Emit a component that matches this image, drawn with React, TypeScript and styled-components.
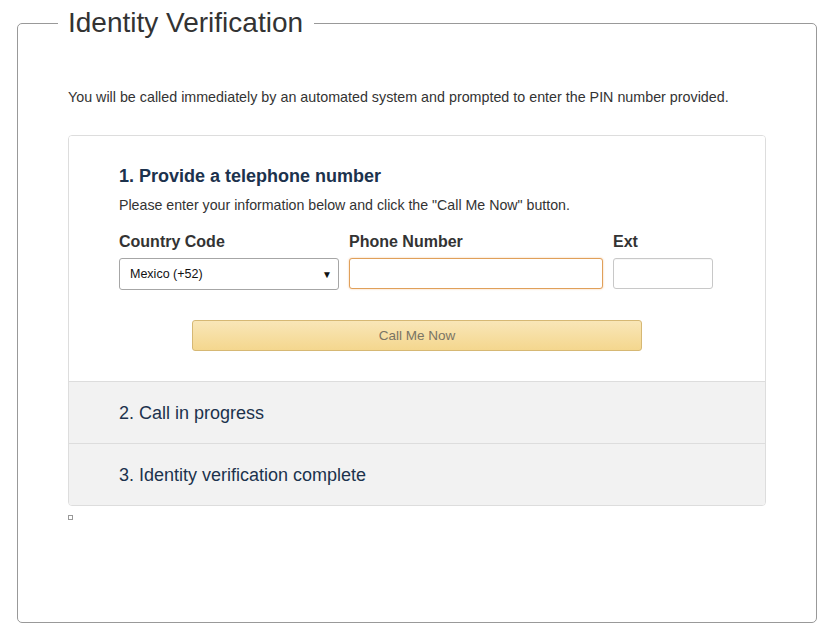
import React from "react";
import styled, { createGlobalStyle } from "styled-components";

const Global = createGlobalStyle`
  html, body { margin: 0; padding: 0; background: #fff; }
  body { font-family: "Liberation Sans", Arial, sans-serif; color: #333; }
`;

const Page = styled.div`
  padding: 8px 21px 0 17px;
`;

const Frame = styled.fieldset`
  margin: 0;
  box-sizing: border-box;
  height: 615px;
  border: 1px solid #999;
  border-radius: 5px;
  padding: 0 50px 0 40px;
`;

const Legend = styled.legend`
  font-size: 28px;
  line-height: 30px;
  color: #333;
  padding: 0 11px 0 10px;
`;

const Content = styled.div`
  padding: 0 0 0 10px;
`;

const Intro = styled.p`
  margin: 49px 0 28px;
  font-size: 14.3px;
  line-height: 20px;
  color: #333;
`;

const Card = styled.div`
  border: 1px solid #ddd;
  border-radius: 4px;
  overflow: hidden;
`;

const Step = styled.div<{ $active?: boolean }>`
  padding: ${(p) => (p.$active ? "27px 50px 30px" : "0 50px")};
  background: ${(p) => (p.$active ? "#fff" : "#f2f2f2")};
  border-top: ${(p) => (p.$active ? "none" : "1px solid #ddd")};
  height: ${(p) => (p.$active ? "auto" : "61px")};
  display: flex;
  flex-direction: column;
  justify-content: center;
`;

const StepTitle = styled.h3<{ $bold?: boolean }>`
  margin: 0;
  font-size: 18px;
  line-height: 26px;
  font-weight: ${(p) => (p.$bold ? 700 : 400)};
  color: #1c324d;
`;

const Hint = styled.p`
  margin: 6px 0 17px;
  font-size: 14.2px;
  line-height: 20px;
  color: #333;
`;

const Fields = styled.div`
  display: flex;
  gap: 10px;
`;

const Field = styled.div<{ $w: number }>`
  width: ${(p) => p.$w}px;
  display: flex;
  flex-direction: column;
`;

const Label = styled.label`
  font-size: 16px;
  font-weight: 700;
  line-height: 20px;
  color: #333;
  margin-bottom: 6px;
`;

const SelectBox = styled.div`
  box-sizing: border-box;
  height: 32px;
  border: 1px solid #a6a6a6;
  border-radius: 3px;
  display: flex;
  align-items: center;
  justify-content: space-between;
  padding: 0 6px 0 10px;
  font-size: 12.5px;
  color: #111;
  background: #fff;
`;

const Arrow = styled.span`
  font-size: 10px;
  color: #111;
`;

const Input = styled.input<{ $focus?: boolean }>`
  box-sizing: border-box;
  width: 100%;
  height: 31px;
  margin: 0;
  border: 1px solid ${(p) => (p.$focus ? "#e0a05a" : "#c8c8c8")};
  border-radius: 3px;
  box-shadow: ${(p) => (p.$focus ? "0 0 2px rgba(228,121,17,0.45)" : "inset 0 1px 0 rgba(0,0,0,0.03)")};
  outline: none;
  font-size: 13px;
  padding: 0 8px;
`;

const ButtonRow = styled.div`
  display: flex;
  justify-content: center;
  margin-top: 30px;
`;

const Button = styled.button`
  box-sizing: border-box;
  width: 450px;
  height: 31px;
  border: 1px solid #d6b874;
  border-radius: 3px;
  background: linear-gradient(to bottom, #f9e6b8, #f4d78e);
  color: #7a7464;
  font-family: "Liberation Sans", Arial, sans-serif;
  font-size: 13.5px;
  cursor: default;
`;

const Broken = styled.span`
  display: block;
  width: 3px;
  height: 3px;
  margin-top: 9px;
  border: 1px solid #999;
`;

export default function App() {
  return (
    <>
      <Global />
      <Page>
        <Frame>
          <Legend>Identity Verification</Legend>
          <Content>
            <Intro>
              You will be called immediately by an automated system and prompted to enter the PIN number provided.
            </Intro>
            <Card>
              <Step $active>
                <StepTitle $bold>1. Provide a telephone number</StepTitle>
                <Hint>Please enter your information below and click the "Call Me Now" button.</Hint>
                <Fields>
                  <Field $w={220}>
                    <Label>Country Code</Label>
                    <SelectBox>
                      <span>Mexico (+52)</span>
                      <Arrow>▼</Arrow>
                    </SelectBox>
                  </Field>
                  <Field $w={254}>
                    <Label>Phone Number</Label>
                    <Input $focus />
                  </Field>
                  <Field $w={100}>
                    <Label>Ext</Label>
                    <Input />
                  </Field>
                </Fields>
                <ButtonRow>
                  <Button>Call Me Now</Button>
                </ButtonRow>
              </Step>
              <Step>
                <StepTitle>2. Call in progress</StepTitle>
              </Step>
              <Step>
                <StepTitle>3. Identity verification complete</StepTitle>
              </Step>
            </Card>
            <Broken />
          </Content>
        </Frame>
      </Page>
    </>
  );
}
